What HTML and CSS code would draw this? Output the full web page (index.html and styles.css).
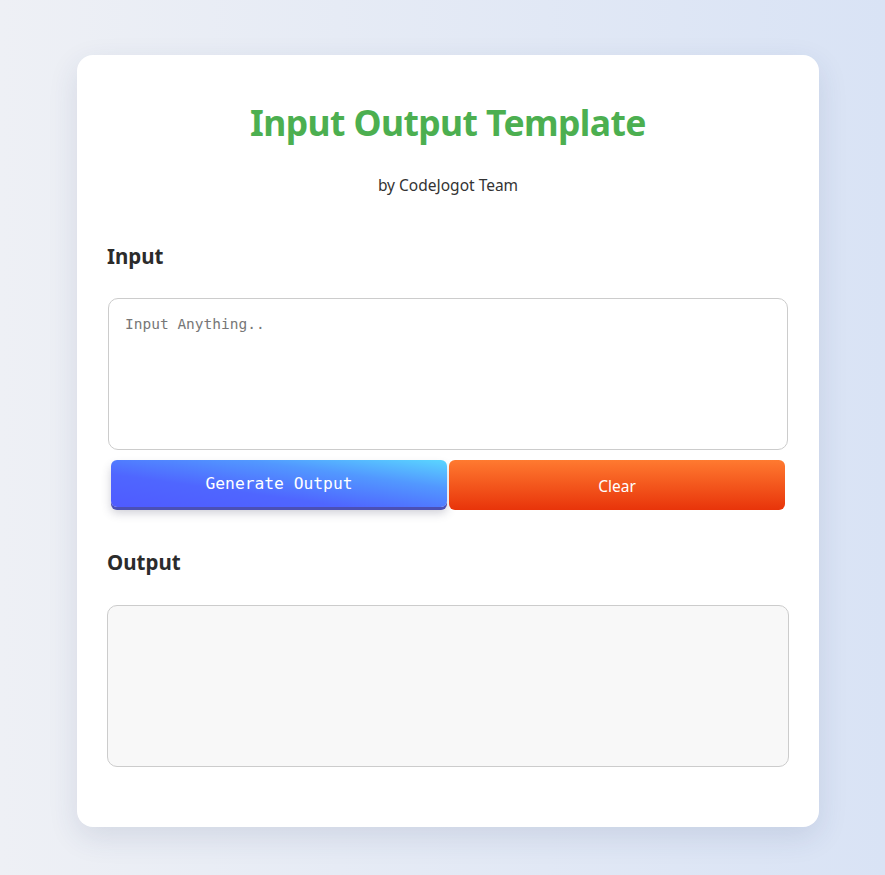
FILE: index.html
```html
<!DOCTYPE html>
<html lang="en">
<head>
<meta charset="utf-8">
<title>Input Output Template</title>
<link rel="stylesheet" href="styles.css">
</head>
<body>
<main class="card">
  <h1 class="title">Input Output Template</h1>
  <p class="byline">by CodeJogot Team</p>
  <h2 class="section-label">Input</h2>
  <textarea class="input-box" placeholder="Input Anything.."></textarea>
  <div class="actions">
    <button class="btn btn-generate">Generate Output</button>
    <button class="btn btn-clear">Clear</button>
  </div>
  <h2 class="section-label output-label">Output</h2>
  <div class="output-box"></div>
</main>
</body>
</html>
```
FILE: styles.css
```css
* { box-sizing: border-box; }
html, body { height: 100%; }
body {
  margin: 0;
  background: linear-gradient(90deg, #eef0f5 0%, #d9e3f5 100%);
  font-family: "Noto Sans", "Open Sans", sans-serif;
  color: #333;
  padding-top: 55px;
}
.card {
  width: 742px;
  margin: 0 auto 0 77px;
  background: #fff;
  border-radius: 16px;
  box-shadow: 0 10px 30px rgba(40, 60, 110, 0.12);
  padding: 30px 30px 60px;
}
.title {
  margin: 12px 0 0;
  text-align: center;
  color: #4caf50;
  font-size: 35.5px;
  font-weight: 700;
  letter-spacing: -0.6px;
  line-height: 50px;
}
.byline {
  margin: 27px 0 0;
  text-align: center;
  font-size: 15.5px;
  color: #333;
  line-height: 22px;
}
.section-label {
  margin: 46px 0 0;
  font-size: 20.5px;
  font-weight: 700;
  color: #2b2b2b;
  line-height: 28px;
}
.input-box {
  display: block;
  width: 680px;
  height: 152px;
  margin: 28px 0 0 1px;
  border: 1px solid #ccc;
  border-radius: 10px;
  padding: 17px 16px 15px;
  font-family: "DejaVu Sans Mono", monospace;
  font-size: 14.5px;
  resize: none;
  outline: none;
  color: #333;
}
.input-box::placeholder { color: #777; }
.actions {
  display: flex;
  gap: 2px;
  margin: 10px 0 0 4px;
  width: 674px;
}
.btn {
  flex: 1;
  height: 50px;
  border: none;
  border-radius: 6px;
  color: #fff;
  cursor: pointer;
}
.btn-generate {
  height: 47px;
  background: linear-gradient(to top right, #4f5bff 0%, #4f66ff 35%, #5298ff 70%, #5ad6ff 100%);
  font-family: "DejaVu Sans Mono", monospace;
  font-size: 16.3px;
  box-shadow: 0 3px 0 #4b50b5, 0 6px 10px rgba(60, 60, 90, 0.25);
  padding-top: 1px;
}
.btn-clear {
  background: linear-gradient(180deg, #ff7a30 0%, #e8340a 100%);
  font-family: "Noto Sans", sans-serif;
  font-size: 15.5px;
  padding-top: 2px;
}
.output-label { margin-top: 38px; }
.output-box {
  width: 682px;
  height: 162px;
  margin-top: 29px;
  background: #f8f8f8;
  border: 1px solid #ccc;
  border-radius: 10px;
}
```
